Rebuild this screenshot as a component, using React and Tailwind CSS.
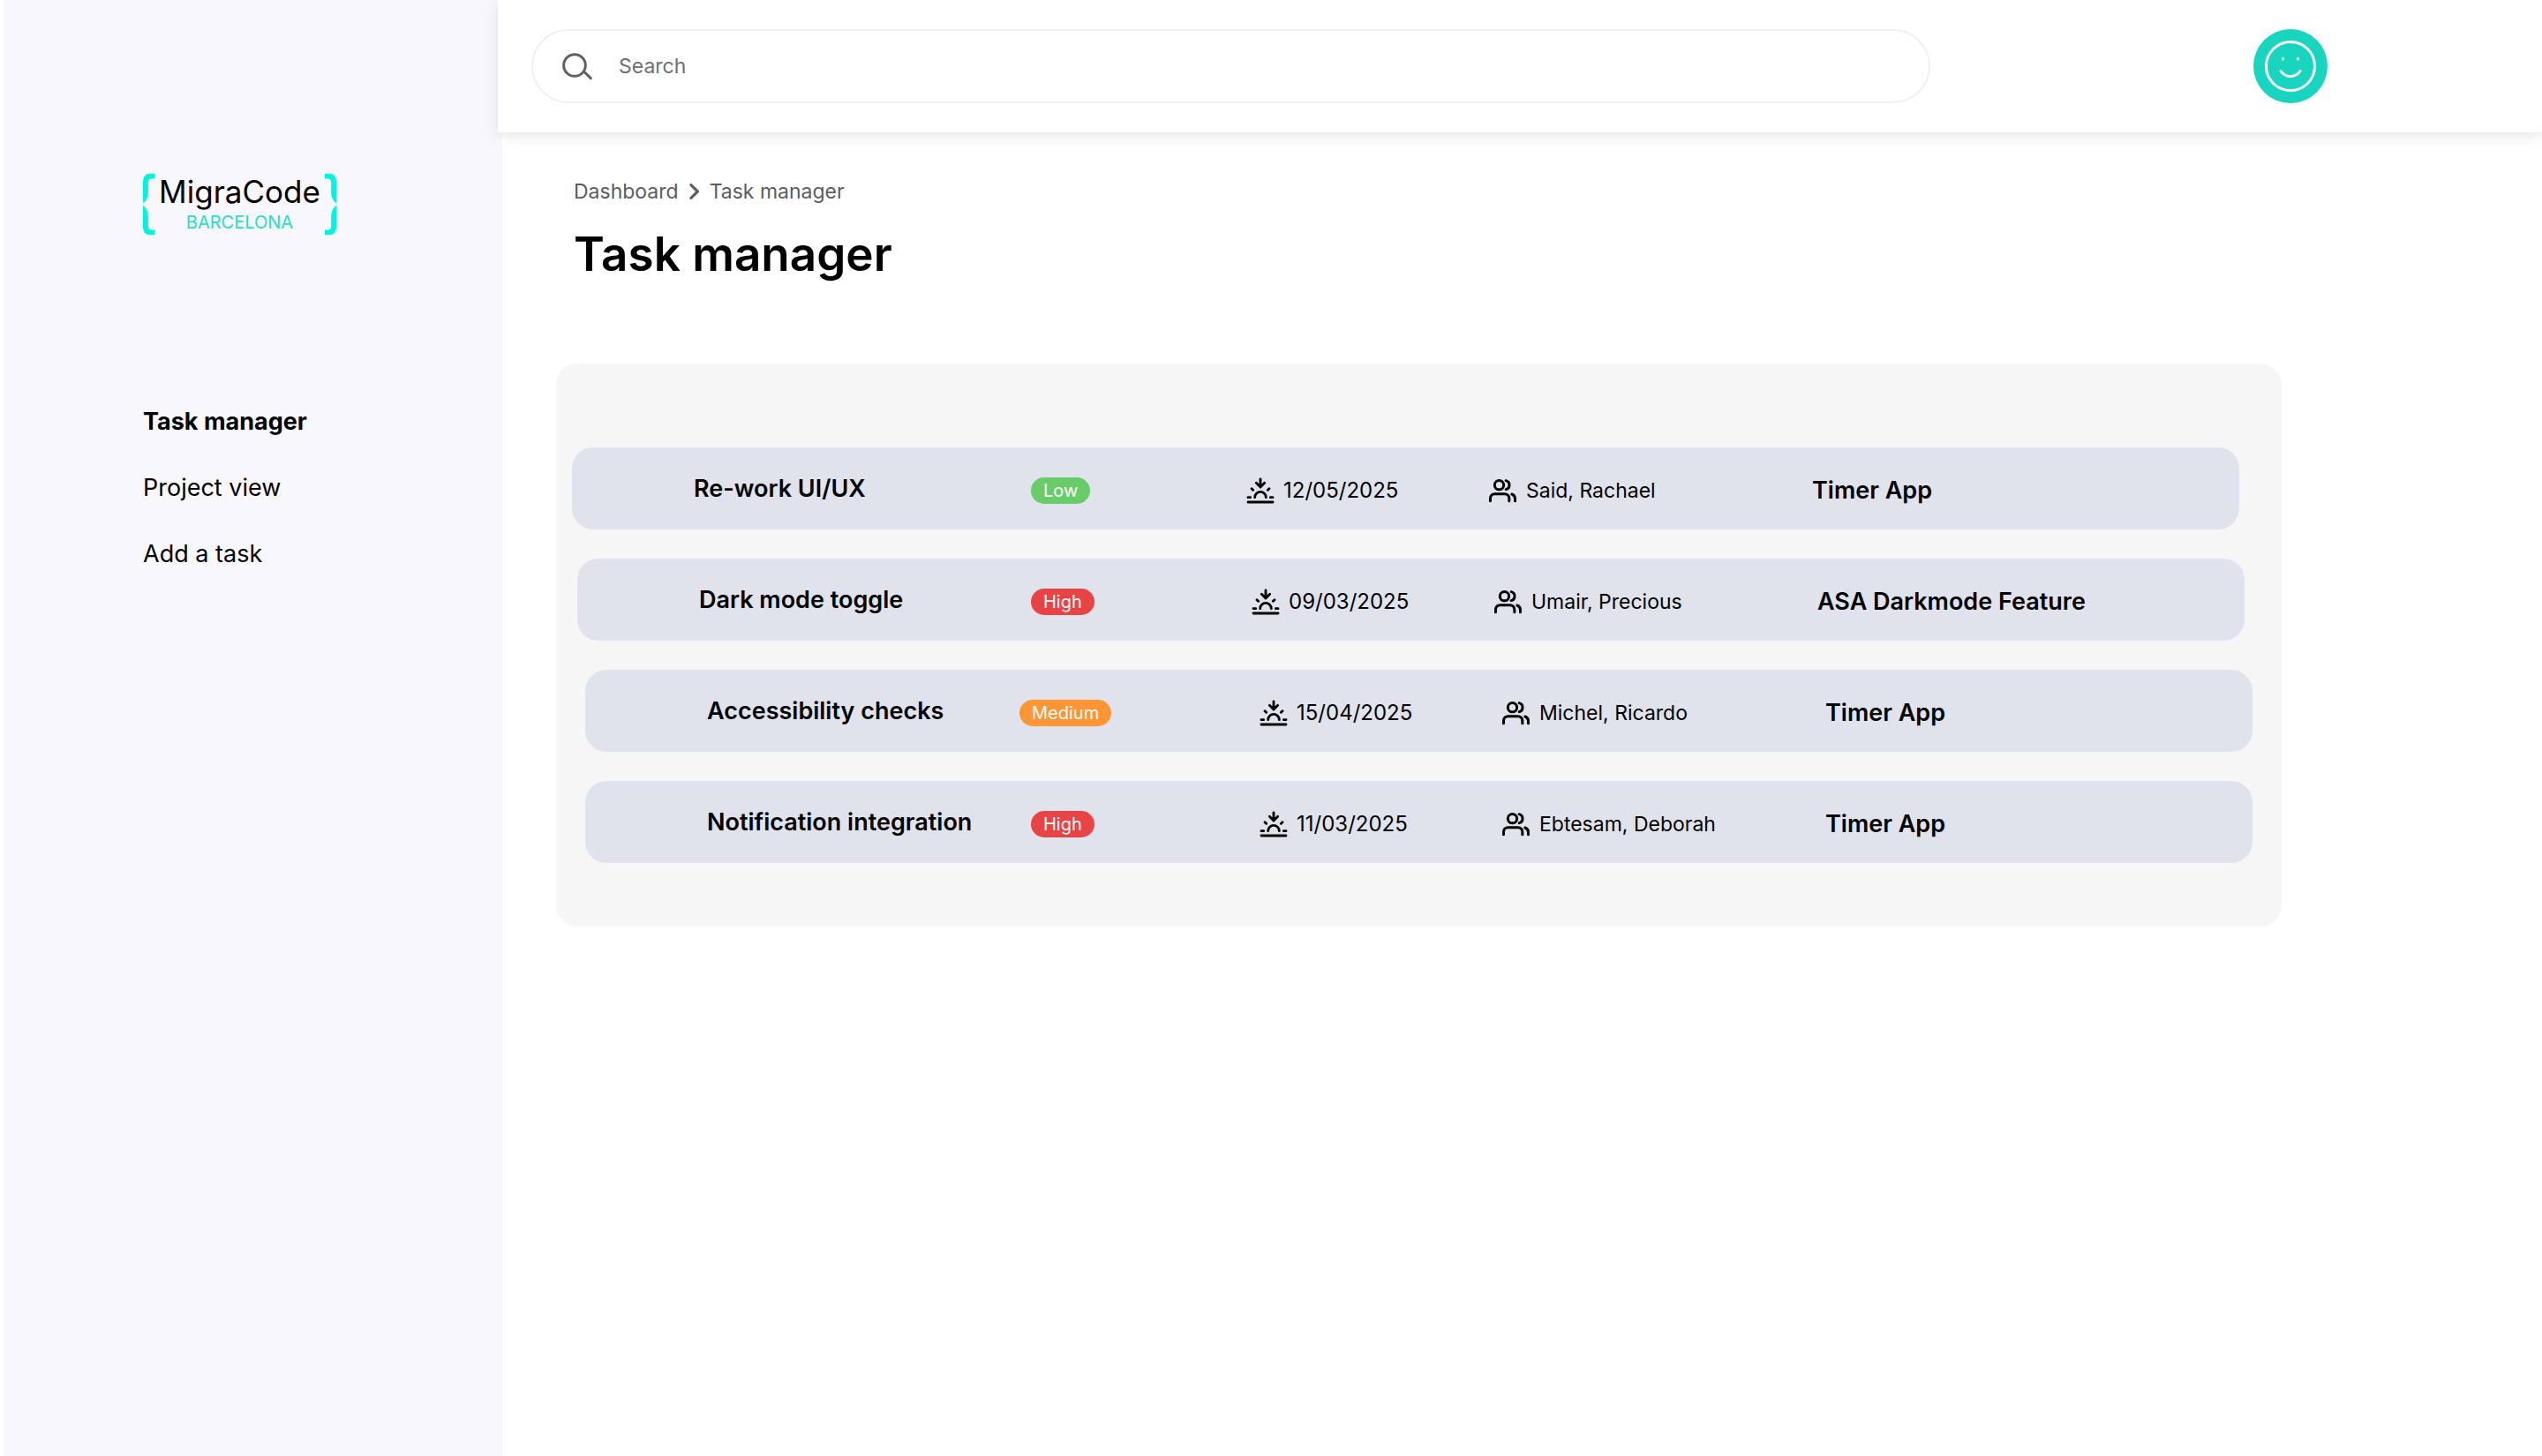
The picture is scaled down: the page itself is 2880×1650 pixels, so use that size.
const NAV = [
  { label: "Task manager", current: true },
  { label: "Project view", current: false },
  { label: "Add a task", current: false },
];

const PRIORITY = {
  Low: "bg-[#68cc68]",
  Medium: "bg-[#ff9533]",
  High: "bg-[#e84446]",
};

const TASKS = [
  {
    name: "Re-work UI/UX",
    priority: "Low",
    date: "12/05/2025",
    people: "Said, Rachael",
    project: "Timer App",
    row: "mr-[15px] grid-cols-[382fr_244fr_274fr_367fr_484fr]",
  },
  {
    name: "Dark mode toggle",
    priority: "High",
    date: "09/03/2025",
    people: "Umair, Precious",
    project: "ASA Darkmode Feature",
    row: "mr-[9px] ml-[6px] grid-cols-[376fr_250fr_274fr_367fr_484fr]",
  },
  {
    name: "Accessibility checks",
    priority: "Medium",
    date: "15/04/2025",
    people: "Michel, Ricardo",
    project: "Timer App",
    row: "ml-[15px] grid-cols-[354fr_272fr_274fr_367fr_484fr]",
  },
  {
    name: "Notification integration",
    priority: "High",
    date: "11/03/2025",
    people: "Ebtesam, Deborah",
    project: "Timer App",
    row: "ml-[15px] grid-cols-[367fr_259fr_274fr_367fr_484fr]",
  },
];

function Brace({ className = "" }) {
  const half =
    "M106 48H92Q66 48 66 76V152Q84 136 84 114V80Q84 66 96 66H106Z";
  return (
    <svg
      viewBox="66 48 40 214"
      className={`h-[71px] w-[13px] shrink-0 fill-[#00f5dc] ${className}`}
      aria-hidden="true"
    >
      <path d={half} />
      <path d={half} transform="translate(0 310) scale(1 -1)" />
    </svg>
  );
}

function Logo() {
  return (
    <a href="#home" className="flex w-[219px]">
      <Brace />
      <span className="flex flex-1 flex-col items-center whitespace-nowrap pt-px">
        <span className="text-[35px] leading-10">MigraCode</span>
        <span className="text-xl leading-[30px] text-[#2bdcc6]">BARCELONA</span>
      </span>
      <Brace className="-scale-x-100" />
    </a>
  );
}

function Sidebar() {
  return (
    <aside className="ml-1 w-[565px] shrink-0 bg-[#f8f8fc] pt-[196px] pl-[158px]">
      <Logo />
      <nav aria-label="Main" className="mt-[193px]">
        <ul className="flex flex-col gap-[39px] text-[27px] leading-9">
          {NAV.map((item) => (
            <li key={item.label}>
              <a
                href="#nav"
                aria-current={item.current ? "page" : undefined}
                className={item.current ? "font-bold" : ""}
              >
                {item.label}
              </a>
            </li>
          ))}
        </ul>
      </nav>
    </aside>
  );
}

function SearchIcon() {
  return (
    <svg
      viewBox="138 116 108 96"
      className="h-8 w-9 shrink-0 fill-none stroke-[#606060]"
      strokeWidth="9"
      strokeLinecap="round"
      aria-hidden="true"
    >
      <circle cx="183" cy="161" r="37" />
      <path d="M214 182L238 205" />
    </svg>
  );
}

function ChevronIcon() {
  return (
    <svg
      viewBox="572 562 40 60"
      className="h-5 w-[13px] shrink-0 fill-none stroke-[#606060]"
      strokeWidth="10"
      strokeLinecap="round"
      strokeLinejoin="round"
      aria-hidden="true"
    >
      <path d="M581 569L604 592L581 615" />
    </svg>
  );
}

function DueIcon() {
  return (
    <svg
      viewBox="36 34 96 90"
      className="h-[30px] w-8 shrink-0 fill-none stroke-black"
      strokeWidth="8.5"
      strokeLinecap="round"
      strokeLinejoin="round"
      aria-hidden="true"
    >
      <path d="M42 118H126" />
      <path d="M42 102H50M118 102H126" />
      <path d="M65 102a19 19 0 0 1 38 0" />
      <path d="M54 72L59 77M114 72L109 77" />
      <path d="M84 40V65M70 53L84 67L98 53" />
    </svg>
  );
}

function PeopleIcon() {
  return (
    <svg
      viewBox="859 38 98 84"
      className="h-7 w-[33px] shrink-0 fill-none stroke-black"
      strokeWidth="9"
      strokeLinecap="round"
      strokeLinejoin="round"
      aria-hidden="true"
    >
      <circle cx="896" cy="61" r="15.5" />
      <path d="M866 115V106a15 15 0 0 1 15-15H915a15 15 0 0 1 15 15V115" />
      <path d="M919 46a15.5 15.5 0 0 1 0 30" />
      <path d="M950 115V107Q950 96 939 92" />
    </svg>
  );
}

function Avatar() {
  return (
    <button
      type="button"
      aria-label="Account"
      className="size-[84px] shrink-0 rounded-full bg-[#18d5c0]"
    >
      <svg
        viewBox="0 0 84 84"
        className="size-full fill-none stroke-white"
        strokeWidth="3"
        strokeLinecap="round"
        aria-hidden="true"
      >
        <circle cx="42" cy="42" r="27.5" />
        <path d="M31 47.500Q35 53.500 42 53.500Q49 53.500 53 47.500" />
        <path d="M33.500 33.300V33.900M50.500 33.300V33.900" />
      </svg>
    </button>
  );
}

function Header() {
  return (
    <header className="relative -ml-[5px] flex h-[150px] items-center bg-white pr-[243px] pl-[38px] shadow-[0_4px_16px_rgba(0,0,0,0.1)]">
      <div className="mr-[366px] flex h-[84px] flex-1 items-center gap-[29px] rounded-full border-2 border-[#f0f0f0] px-8">
        <label htmlFor="search">
          <SearchIcon />
        </label>
        <input
          id="search"
          type="search"
          aria-label="Search"
          placeholder="Search"
          className="min-w-0 flex-1 bg-transparent text-[23px] leading-8 outline-none placeholder:text-[#707070]"
        />
      </div>
      <Avatar />
    </header>
  );
}

function TaskRow({ task }) {
  return (
    <li
      className={`grid h-[93px] items-center rounded-3xl bg-[#e0e3eb] pl-[138px] whitespace-nowrap ${task.row}`}
    >
      <h2 className="text-[27px] leading-9 font-semibold">{task.name}</h2>
      <div className="flex pt-1">
        <span
          className={`rounded-full px-3.5 text-xl leading-[30px] text-white ${PRIORITY[task.priority]}`}
        >
          {task.priority}
        </span>
      </div>
      <div className="flex items-center gap-2.5 pt-1 text-2xl">
        <DueIcon />
        <time>{task.date}</time>
      </div>
      <div className="flex items-center gap-2.5 pt-1 text-[23px] leading-8">
        <PeopleIcon />
        <span>{task.people}</span>
      </div>
      <div className="pt-1 text-[27px] leading-9 font-semibold">{task.project}</div>
    </li>
  );
}

export default function App() {
  return (
    <div className="flex min-h-screen bg-white font-['Inter',sans-serif] text-black">
      <Sidebar />
      <div className="min-w-0 flex-1">
        <Header />
        <main className="pt-[51px] pr-[295px] pl-[61px]">
          <nav aria-label="Breadcrumb" className="pl-5">
            <ol className="flex items-center gap-[11px] text-[23px] leading-8 text-[#5c5c5c]">
              <li>
                <a href="#dashboard">Dashboard</a>
              </li>
              <li aria-hidden="true">
                <ChevronIcon />
              </li>
              <li>
                <a href="#tasks" aria-current="page">
                  Task manager
                </a>
              </li>
            </ol>
          </nav>
          <h1 className="mt-[23px] pl-5 text-[53px] leading-16 font-semibold">
            Task manager
          </h1>
          <ul className="mt-[92px] flex flex-col gap-[33px] rounded-3xl bg-[#f6f6f6] pt-[95px] pr-[33px] pb-[72px] pl-[18px]">
            {TASKS.map((task) => (
              <TaskRow key={task.name} task={task} />
            ))}
          </ul>
        </main>
      </div>
    </div>
  );
}
